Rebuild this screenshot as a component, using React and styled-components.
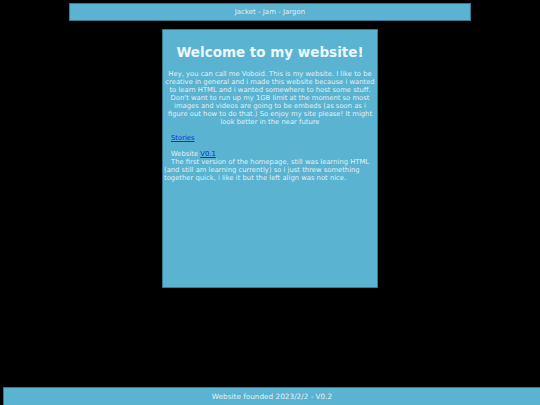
import React from "react";
import styled, { createGlobalStyle } from "styled-components";

const Global = createGlobalStyle`
  html, body {
    margin: 0;
    padding: 0;
    background: #000;
  }
  body {
    font-family: "DejaVu Sans", Verdana, sans-serif;
    color: #e2f0f6;
  }
`;

const Page = styled.div`
  min-height: 100vh;
  display: flex;
  flex-direction: column;
  align-items: center;
  padding-top: 3px;
  box-sizing: border-box;
`;

const Header = styled.header`
  width: 402px;
  height: 18px;
  box-sizing: border-box;
  background: #5ab3d1;
  border: 1px solid #3b7890;
  display: flex;
  align-items: center;
  justify-content: center;
  font-size: 7px;
`;

const Main = styled.main`
  margin-top: 8px;
  width: 216px;
  height: 259px;
  box-sizing: border-box;
  background: #5ab3d1;
  border: 1px solid #3b7890;
  padding: 0 1px;
`;

const Title = styled.h1`
  margin: 14px 0 9.6px;
  text-align: center;
  font-size: 13.5px;
  line-height: 16px;
  font-weight: bold;
  color: #eef7fb;
`;

const Intro = styled.p`
  margin: 0;
  text-align: center;
  font-size: 6.8px;
  line-height: 8.1px;
`;

const Section = styled.div`
  margin-top: ${({ $gap }) => $gap}px;
  font-size: 6.8px;
  line-height: 8.3px;
  text-indent: ${({ $indent }) => $indent || 0}px;
`;

const Link = styled.a`
  color: #0b2fd8;
  text-decoration: underline;
`;

const Footer = styled.footer`
  margin-top: auto;
  align-self: stretch;
  margin-left: 3px;
  height: 17px;
  background: #5ab3d1;
  border-top: 1px solid #3b7890;
  border-left: 1px solid #3b7890;
  display: flex;
  align-items: center;
  justify-content: center;
  font-size: 7.3px;
`;

export default function App() {
  return (
    <>
      <Global />
      <Page>
        <Header>Jacket - Jam - Jargon</Header>
        <Main>
          <Title>Welcome to my website!</Title>
          <Intro>
            Hey, you can call me Voboid. This is my website. I like to be
            creative in general and i made this website because i wanted to
            learn HTML and i wanted somewhere to host some stuff. Don't want to
            run up my 1GB limit at the moment so most images and videos are
            going to be embeds (as soon as i figure out how to do that.) So
            enjoy my site please! It might look better in the near future
          </Intro>
          <Section $gap={8} $indent={7}>
            <Link href="#">Stories</Link>
          </Section>
          <Section $gap={7} $indent={7}>
            Website <Link href="#">V0.1</Link>
          </Section>
          <Section $gap={0} $indent={7}>
            The first version of the homepage, still was learning HTML (and
            still am learning currently) so i just threw something together
            quick, i like it but the left align was not nice.
          </Section>
        </Main>
        <Footer>Website founded 2023/2/2 - V0.2</Footer>
      </Page>
    </>
  );
}
